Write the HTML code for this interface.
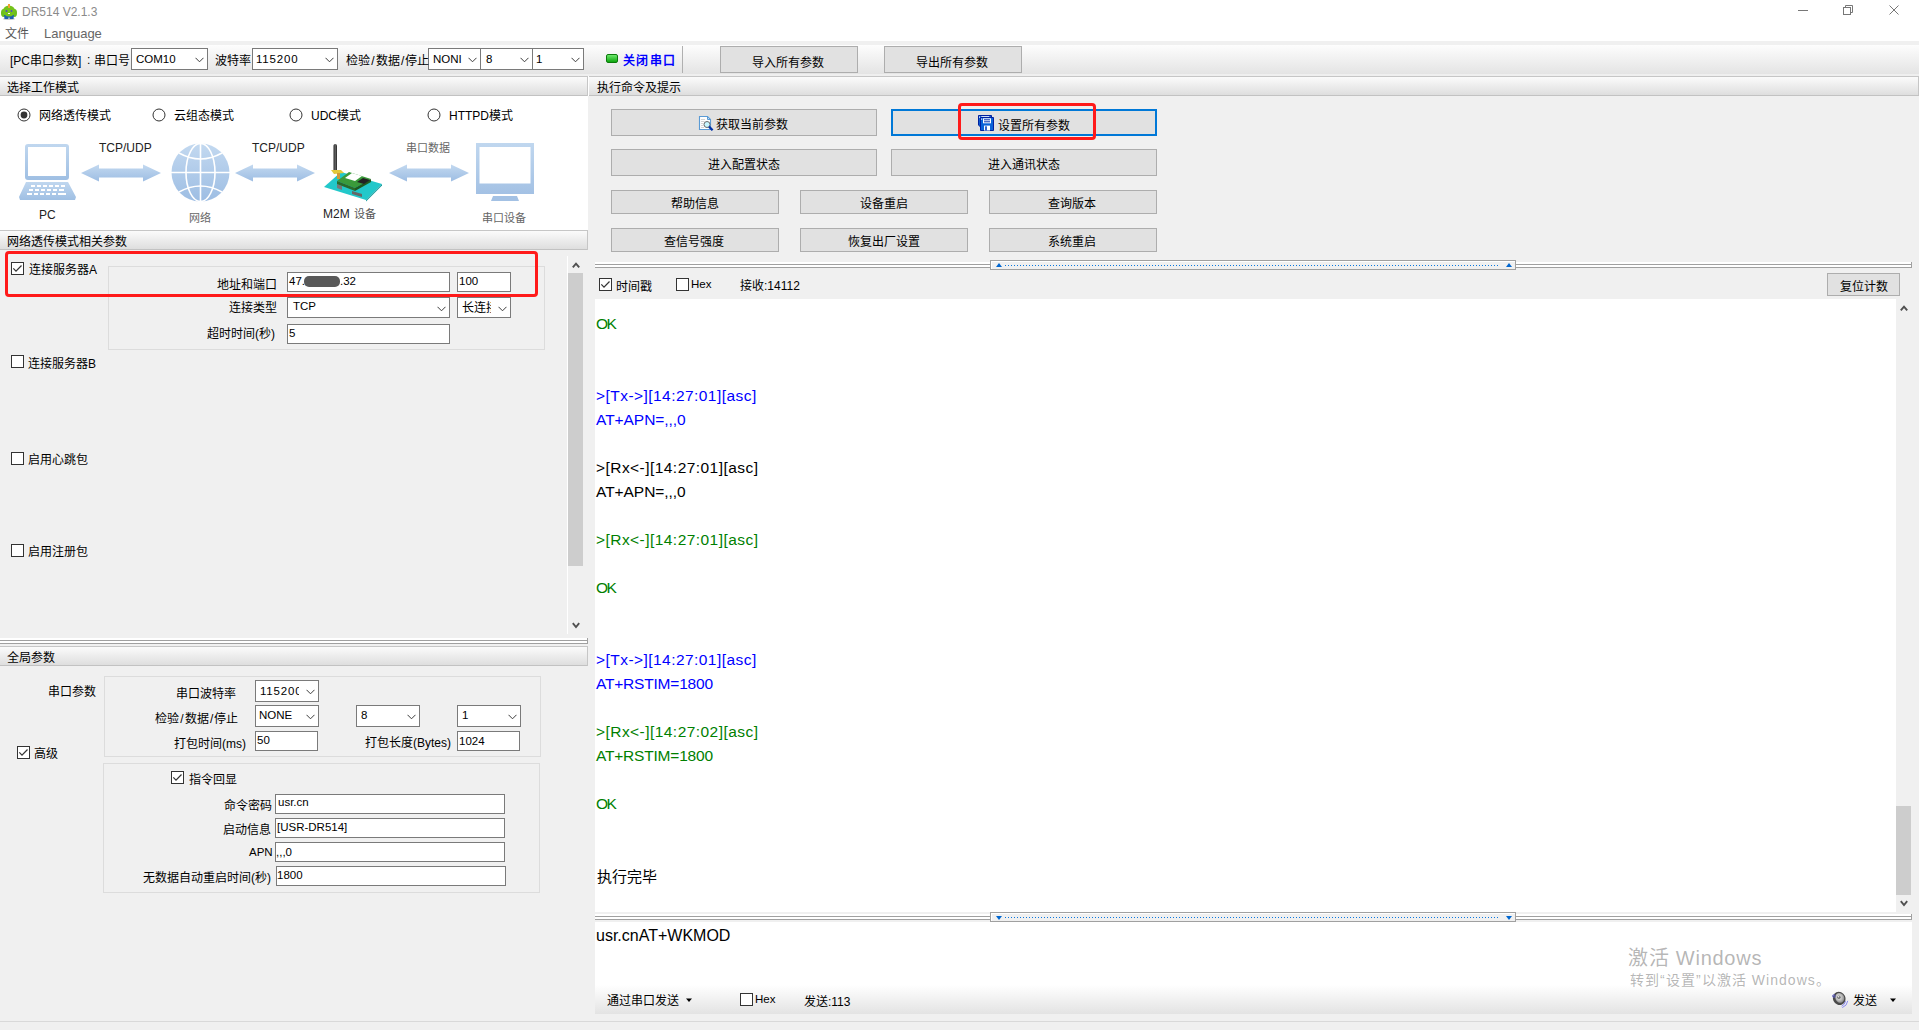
<!DOCTYPE html>
<html lang="zh-CN"><head><meta charset="utf-8"><title>DR514 V2.1.3</title>
<style>
html,body{margin:0;padding:0;width:1919px;height:1030px;overflow:hidden;background:#f0f0f0;font-family:'Liberation Sans', sans-serif;}
body>div{position:absolute;box-sizing:border-box;}
</style></head><body>
<div style="left:0px;top:0px;width:1919px;height:41px;background:#fff;"></div>
<svg style="position:absolute;left:0;top:2px" width="20" height="18">
<ellipse cx="9" cy="17" rx="6" ry="1" fill="#ccc"/>
<ellipse cx="3.5" cy="11" rx="2.5" ry="4" fill="#6cbf1c"/><ellipse cx="14.5" cy="11" rx="2.5" ry="4" fill="#6cbf1c"/>
<path d="M4 13 L14 13 L13.5 17 L10 17 L9 15 L8 17 L4.5 17Z" fill="#1f5fb0"/>
<ellipse cx="9" cy="9" rx="6" ry="5.5" fill="#74c21b"/>
<rect x="8" y="2" width="2" height="4" fill="#f0a030"/>
<circle cx="6.5" cy="9" r="1" fill="#5050c0"/><circle cx="11.5" cy="9" r="1" fill="#5050c0"/>
<rect x="8" y="11" width="2" height="1" fill="#fff"/>
</svg>
<svg style="position:absolute;left:1790px;top:0" width="129" height="24"><line x1="8" y1="10.5" x2="18" y2="10.5" stroke="#777" stroke-width="1"/><rect x="53.5" y="7.5" width="7" height="7" fill="none" stroke="#777"/><path d="M55.5 7.5 V5.5 H62.5 V12.5 H60.5" fill="none" stroke="#777"/><path d="M99.5 5.5 L108.5 14.5 M108.5 5.5 L99.5 14.5" stroke="#777" stroke-width="1"/></svg>
<div style="left:0px;top:41px;width:1919px;height:4px;background:#f0f0f0;"></div>
<div style="left:0px;top:45px;width:1919px;height:29px;background:linear-gradient(#fdfdfd,#e4e4e4);"></div>
<div style="left:0px;top:74px;width:1919px;height:2px;background:#efefef;"></div>
<div style="left:131px;top:48px;width:77px;height:22px;background:#fff;border:1px solid #7a7a7a;"></div>
<svg style="position:absolute;left:195px;top:57.0px" width="9" height="6"><path d="M0.5 0.8 L4.5 4.8 L8.5 0.8" fill="none" stroke="#3c3c3c" stroke-width="1"/></svg>
<div style="left:252px;top:48px;width:86px;height:22px;background:#fff;border:1px solid #7a7a7a;"></div>
<svg style="position:absolute;left:325px;top:57.0px" width="9" height="6"><path d="M0.5 0.8 L4.5 4.8 L8.5 0.8" fill="none" stroke="#3c3c3c" stroke-width="1"/></svg>
<div style="left:428px;top:48px;width:53px;height:22px;background:#fff;border:1px solid #7a7a7a;"></div>
<svg style="position:absolute;left:468px;top:57.0px" width="9" height="6"><path d="M0.5 0.8 L4.5 4.8 L8.5 0.8" fill="none" stroke="#3c3c3c" stroke-width="1"/></svg>
<div style="left:480px;top:48px;width:53px;height:22px;background:#fff;border:1px solid #7a7a7a;"></div>
<svg style="position:absolute;left:520px;top:57.0px" width="9" height="6"><path d="M0.5 0.8 L4.5 4.8 L8.5 0.8" fill="none" stroke="#3c3c3c" stroke-width="1"/></svg>
<div style="left:532px;top:48px;width:52px;height:22px;background:#fff;border:1px solid #7a7a7a;"></div>
<svg style="position:absolute;left:571px;top:57.0px" width="9" height="6"><path d="M0.5 0.8 L4.5 4.8 L8.5 0.8" fill="none" stroke="#3c3c3c" stroke-width="1"/></svg>
<div style="left:606px;top:54px;width:12px;height:9px;background:linear-gradient(#6de86d,#0fa60f);border:1px solid #0b7a0b;border-radius:2px;"></div>
<div style="left:682px;top:46px;width:1px;height:27px;background:#b0b0b0;"></div>
<div style="left:720px;top:46px;width:138px;height:27px;background:#e1e1e1;border:1px solid #adadad;"></div>
<div style="left:884px;top:46px;width:138px;height:27px;background:#e1e1e1;border:1px solid #adadad;"></div>
<div style="left:0px;top:76px;width:588px;height:20px;background:linear-gradient(#fbfbfb,#dedede);border-top:1px solid #c6c6c6;border-bottom:1px solid #c2c2c2;"></div>
<div style="left:587px;top:76px;width:1px;height:20px;background:#c6c6c6;"></div>
<div style="left:588px;top:76px;width:1px;height:20px;background:#fff;"></div>
<div style="left:0px;top:96px;width:588px;height:134px;background:#fff;"></div>
<svg style="position:absolute;left:17px;top:107.5px" width="14" height="14"><circle cx="7" cy="7" r="6" fill="#fff" stroke="#333" stroke-width="1"/><circle cx="7" cy="7" r="3.4" fill="#333"/></svg>
<svg style="position:absolute;left:152.4px;top:107.6px" width="14" height="14"><circle cx="7" cy="7" r="6" fill="#fff" stroke="#333" stroke-width="1"/></svg>
<svg style="position:absolute;left:289px;top:107.6px" width="14" height="14"><circle cx="7" cy="7" r="6" fill="#fff" stroke="#333" stroke-width="1"/></svg>
<svg style="position:absolute;left:427px;top:107.6px" width="14" height="14"><circle cx="7" cy="7" r="6" fill="#fff" stroke="#333" stroke-width="1"/></svg>
<svg style="position:absolute;left:81px;top:164px" width="80" height="18"><defs><linearGradient id="ag" x1="0" y1="0" x2="0" y2="1"><stop offset="0" stop-color="#c3d9f0"/><stop offset="1" stop-color="#9dbde3"/></linearGradient></defs><path d="M0 9 L18 0.5 L18 4.5 L62 4.5 L62 0.5 L80 9 L62 17.5 L62 13.5 L18 13.5 L18 17.5 Z" fill="url(#ag)"/></svg>
<svg style="position:absolute;left:235px;top:164px" width="80" height="18"><defs><linearGradient id="ag" x1="0" y1="0" x2="0" y2="1"><stop offset="0" stop-color="#c3d9f0"/><stop offset="1" stop-color="#9dbde3"/></linearGradient></defs><path d="M0 9 L18 0.5 L18 4.5 L62 4.5 L62 0.5 L80 9 L62 17.5 L62 13.5 L18 13.5 L18 17.5 Z" fill="url(#ag)"/></svg>
<svg style="position:absolute;left:389px;top:164px" width="80" height="18"><defs><linearGradient id="ag" x1="0" y1="0" x2="0" y2="1"><stop offset="0" stop-color="#c3d9f0"/><stop offset="1" stop-color="#9dbde3"/></linearGradient></defs><path d="M0 9 L18 0.5 L18 4.5 L62 4.5 L62 0.5 L80 9 L62 17.5 L62 13.5 L18 13.5 L18 17.5 Z" fill="url(#ag)"/></svg>
<svg style="position:absolute;left:18px;top:143px" width="60" height="59">
<defs><linearGradient id="lg" x1="0" y1="0" x2="0" y2="1"><stop offset="0" stop-color="#c0d7ef"/><stop offset="1" stop-color="#9fbfe3"/></linearGradient></defs>
<rect x="7" y="1" width="44" height="36" rx="3" fill="url(#lg)"/>
<rect x="10" y="4" width="38" height="29" fill="#fff"/>
<path d="M8 39 L50 39 L58 54 L57 57 L2 57 L1 54 Z" fill="url(#lg)"/>
<g fill="#fff"><rect x="13" y="42" width="4" height="2"/><rect x="19" y="42" width="4" height="2"/><rect x="25" y="42" width="4" height="2"/><rect x="31" y="42" width="4" height="2"/><rect x="37" y="42" width="4" height="2"/><rect x="43" y="42" width="4" height="2"/>
<rect x="11" y="46" width="4" height="2"/><rect x="17" y="46" width="4" height="2"/><rect x="23" y="46" width="4" height="2"/><rect x="29" y="46" width="4" height="2"/><rect x="35" y="46" width="4" height="2"/><rect x="41" y="46" width="5" height="2"/>
<rect x="9" y="50" width="5" height="2"/><rect x="16" y="50" width="4" height="2"/><rect x="22" y="50" width="4" height="2"/><rect x="28" y="50" width="4" height="2"/><rect x="34" y="50" width="4" height="2"/><rect x="40" y="50" width="8" height="2"/></g>
</svg>
<svg style="position:absolute;left:171px;top:143px" width="59" height="59">
<defs><linearGradient id="gg" x1="0" y1="0" x2="0" y2="1"><stop offset="0" stop-color="#c3d9f0"/><stop offset="1" stop-color="#9dbde3"/></linearGradient></defs>
<circle cx="29.5" cy="29.5" r="29" fill="url(#gg)"/>
<g fill="none" stroke="#fff" stroke-width="1.6">
<line x1="29.5" y1="0" x2="29.5" y2="59"/><line x1="0" y1="29.5" x2="59" y2="29.5"/>
<ellipse cx="29.5" cy="29.5" rx="14.5" ry="29"/>
<path d="M8 10 Q29.5 22 51 10"/><path d="M8 49 Q29.5 37 51 49"/>
</g></svg>
<svg style="position:absolute;left:322px;top:143px" width="62" height="60">
<defs><linearGradient id="ant" x1="0" y1="0" x2="1" y2="0"><stop offset="0" stop-color="#222"/><stop offset="0.5" stop-color="#666"/><stop offset="1" stop-color="#222"/></linearGradient></defs>
<rect x="11.5" y="1" width="3.5" height="29" rx="1.7" fill="url(#ant)"/>
<path d="M2 44 L19 29 L60 41 L44 57 Z" fill="#22c8ca"/>
<path d="M44 57 L60 41 L60 42.5 L44 58.5 Z" fill="#139c9e"/>
<path d="M15 41 L15 45 L20 47 L20 43Z" fill="#777"/>
<path d="M30 48 L30 51 L40 54 L40 51Z" fill="#666"/>
<path d="M15 38 L27 29 L49 36 L33 45 Z" fill="#3a9a3a"/>
<path d="M15 38 L33 45 L33 48 L15 41 Z" fill="#2a6a2a"/>
<path d="M33 45 L49 36 L49 39 L33 48 Z" fill="#1f5a1f"/>
<path d="M23 35 L30 30 L40 33 L33 38 Z" fill="#fff"/>
<path d="M35 39 L41 35 L48 37 L42 41 Z" fill="#222"/>
<path d="M9 27 L19 27 L22 30 L12 31Z" fill="#e3c83a"/>
<rect x="15" y="30" width="3" height="6" fill="#cf9a3a"/>
</svg>
<svg style="position:absolute;left:476px;top:143px" width="58" height="59">
<defs><linearGradient id="mg" x1="0" y1="0" x2="0" y2="1"><stop offset="0" stop-color="#c0d7ef"/><stop offset="1" stop-color="#a3c1e4"/></linearGradient></defs>
<rect x="0" y="0" width="58" height="51" fill="url(#mg)"/>
<rect x="3.5" y="4" width="51" height="36.5" fill="#fff"/>
<path d="M17 53 L41 53 L43 58 L15 58 Z" fill="#a3c1e4"/>
</svg>
<div style="left:0px;top:230px;width:588px;height:20px;background:linear-gradient(#fbfbfb,#dedede);border-top:1px solid #c6c6c6;border-bottom:1px solid #c2c2c2;"></div>
<div style="left:587px;top:230px;width:1px;height:20px;background:#c6c6c6;"></div>
<div style="left:567px;top:256px;width:1px;height:378px;background:#fff;"></div>
<div style="left:568px;top:273px;width:15px;height:293px;background:#cdcdcd;"></div>
<svg style="position:absolute;left:571.5px;top:261px" width="8" height="8"><path d="M0.8 6.4 L4 2.6 L7.2 6.4" fill="none" stroke="#505050" stroke-width="1.9"/></svg>
<svg style="position:absolute;left:571.5px;top:622px" width="8" height="8"><path d="M0.8 1.2 L4 5 L7.2 1.2" fill="none" stroke="#505050" stroke-width="1.9"/></svg>
<div style="left:11px;top:262px;width:13px;height:13px;background:#fff;border:1px solid #333;"><svg width="11" height="11" style="position:absolute;left:0;top:0"><path d="M1.3 5.4 L4 8.1 L9.5 2.5" fill="none" stroke="#333" stroke-width="1.25"/></svg></div>
<div style="left:108px;top:266px;width:437px;height:84px;border:1px solid #dcdcdc;"></div>
<div style="left:287px;top:272px;width:163px;height:20px;background:#fff;border:1px solid #7a7a7a;"></div>
<div style="left:304px;top:276px;width:36px;height:11px;background:#595959;border-radius:5px;filter:blur(0.6px);"></div>
<div style="left:457px;top:272px;width:54px;height:20px;background:#fff;border:1px solid #7a7a7a;"></div>
<div style="left:287px;top:297px;width:163px;height:21px;background:#fff;border:1px solid #7a7a7a;"></div>
<svg style="position:absolute;left:437px;top:305.5px" width="9" height="6"><path d="M0.5 0.8 L4.5 4.8 L8.5 0.8" fill="none" stroke="#3c3c3c" stroke-width="1"/></svg>
<div style="left:457px;top:297px;width:54px;height:21px;background:#fff;border:1px solid #7a7a7a;"></div>
<svg style="position:absolute;left:498px;top:305.5px" width="9" height="6"><path d="M0.5 0.8 L4.5 4.8 L8.5 0.8" fill="none" stroke="#3c3c3c" stroke-width="1"/></svg>
<div style="left:287px;top:324px;width:163px;height:20px;background:#fff;border:1px solid #7a7a7a;"></div>
<div style="left:11px;top:355px;width:13px;height:13px;background:#fff;border:1px solid #333;"></div>
<div style="left:11px;top:452px;width:13px;height:13px;background:#fff;border:1px solid #333;"></div>
<div style="left:11px;top:544px;width:13px;height:13px;background:#fff;border:1px solid #333;"></div>
<div style="left:5px;top:251px;width:533px;height:46px;border:3px solid #ff1a1a;border-radius:4px;"></div>
<div style="left:0px;top:638px;width:588px;height:6px;background:#fff;"></div>
<div style="left:0px;top:640px;width:588px;height:1px;background:#a0a0a0;"></div>
<div style="left:0px;top:643px;width:588px;height:1px;background:#a0a0a0;"></div>
<div style="left:587px;top:638px;width:1px;height:6px;background:#a0a0a0;"></div>
<div style="left:0px;top:646px;width:588px;height:20px;background:linear-gradient(#fbfbfb,#dedede);border-top:1px solid #c6c6c6;border-bottom:1px solid #c2c2c2;"></div>
<div style="left:587px;top:646px;width:1px;height:20px;background:#c6c6c6;"></div>
<div style="left:104px;top:676px;width:437px;height:81px;border:1px solid #dcdcdc;"></div>
<div style="left:255px;top:680px;width:64px;height:22px;background:#fff;border:1px solid #7a7a7a;"></div>
<svg style="position:absolute;left:306px;top:689.0px" width="9" height="6"><path d="M0.5 0.8 L4.5 4.8 L8.5 0.8" fill="none" stroke="#3c3c3c" stroke-width="1"/></svg>
<div style="left:255px;top:705px;width:64px;height:22px;background:#fff;border:1px solid #7a7a7a;"></div>
<svg style="position:absolute;left:306px;top:714.0px" width="9" height="6"><path d="M0.5 0.8 L4.5 4.8 L8.5 0.8" fill="none" stroke="#3c3c3c" stroke-width="1"/></svg>
<div style="left:356px;top:705px;width:64px;height:22px;background:#fff;border:1px solid #7a7a7a;"></div>
<svg style="position:absolute;left:407px;top:714.0px" width="9" height="6"><path d="M0.5 0.8 L4.5 4.8 L8.5 0.8" fill="none" stroke="#3c3c3c" stroke-width="1"/></svg>
<div style="left:457px;top:705px;width:64px;height:22px;background:#fff;border:1px solid #7a7a7a;"></div>
<svg style="position:absolute;left:508px;top:714.0px" width="9" height="6"><path d="M0.5 0.8 L4.5 4.8 L8.5 0.8" fill="none" stroke="#3c3c3c" stroke-width="1"/></svg>
<div style="left:255px;top:731px;width:63px;height:20px;background:#fff;border:1px solid #7a7a7a;"></div>
<div style="left:457px;top:731px;width:63px;height:20px;background:#fff;border:1px solid #7a7a7a;"></div>
<div style="left:17px;top:746px;width:13px;height:13px;background:#fff;border:1px solid #333;"><svg width="11" height="11" style="position:absolute;left:0;top:0"><path d="M1.3 5.4 L4 8.1 L9.5 2.5" fill="none" stroke="#333" stroke-width="1.25"/></svg></div>
<div style="left:103px;top:763px;width:437px;height:130px;border:1px solid #dcdcdc;"></div>
<div style="left:171px;top:771px;width:13px;height:13px;background:#fff;border:1px solid #333;"><svg width="11" height="11" style="position:absolute;left:0;top:0"><path d="M1.3 5.4 L4 8.1 L9.5 2.5" fill="none" stroke="#333" stroke-width="1.25"/></svg></div>
<div style="left:275px;top:794px;width:230px;height:20px;background:#fff;border:1px solid #7a7a7a;"></div>
<div style="left:275px;top:818px;width:230px;height:20px;background:#fff;border:1px solid #7a7a7a;"></div>
<div style="left:275px;top:842px;width:230px;height:20px;background:#fff;border:1px solid #7a7a7a;"></div>
<div style="left:276px;top:866px;width:230px;height:20px;background:#fff;border:1px solid #7a7a7a;"></div>
<div style="left:589px;top:76px;width:1330px;height:20px;background:linear-gradient(#fbfbfb,#dedede);border-top:1px solid #c6c6c6;border-bottom:1px solid #c2c2c2;"></div>
<div style="left:1918px;top:77px;width:1px;height:18px;background:#c6c6c6;"></div>
<div style="left:611px;top:109px;width:266px;height:27px;background:#e1e1e1;border:1px solid #adadad;"></div>
<svg style="position:absolute;left:698px;top:115px" width="17" height="17">
<path d="M1.5 1.5 H9.5 L12.5 4.5 V14.5 H1.5 Z" fill="#fff" stroke="#5b9bd5" stroke-width="1.1"/>
<path d="M9.5 1.5 V4.5 H12.5" fill="none" stroke="#5b9bd5" stroke-width="1"/>
<path d="M3 4.5 H7 M3 6.5 H6.5 M3 8.5 H5.5 M3 10.5 H5.5 M3 12.5 H6" stroke="#cfcfcf" stroke-width="0.9"/>
<circle cx="9" cy="9.5" r="3" fill="#c8f6ff" stroke="#6a6a6a" stroke-width="1"/>
<path d="M11 11.6 L14.6 15.2" stroke="#0032a8" stroke-width="2.3"/>
</svg>
<div style="left:891px;top:109px;width:266px;height:27px;background:#e1e1e1;border:1px solid #adadad;border:2px solid #0078d7;"></div>
<svg style="position:absolute;left:977px;top:114px" width="19" height="19">
<path d="M1.5 1.5 H14.5 V13.5 H4 L1.5 11 Z" fill="#0a5ad0" stroke="#0020a0" stroke-width="1"/>
<rect x="4.3" y="2.2" width="8" height="1.4" fill="#fff"/>
<rect x="2" y="2.5" width="1.2" height="1.2" fill="#fff"/>
<path d="M3.5 3.5 H16.5 V16.5 H3.5 Z" fill="#0a62d8" stroke="#0020a0" stroke-width="1"/>
<rect x="4" y="4.5" width="1.2" height="1.2" fill="#eef"/>
<rect x="6" y="4.3" width="8" height="5" fill="#fff"/>
<rect x="7" y="5.3" width="6" height="1" fill="#0030b0"/><rect x="7" y="7.3" width="6" height="1" fill="#0030b0"/>
<rect x="7" y="11.6" width="6" height="4.9" fill="#fff"/><rect x="8.2" y="12.3" width="1.6" height="4.2" fill="#0040c0"/>
</svg>
<div style="left:611px;top:149px;width:266px;height:27px;background:#e1e1e1;border:1px solid #adadad;"></div>
<div style="left:891px;top:149px;width:266px;height:27px;background:#e1e1e1;border:1px solid #adadad;"></div>
<div style="left:611px;top:190px;width:168px;height:24px;background:#e1e1e1;border:1px solid #adadad;"></div>
<div style="left:800px;top:190px;width:168px;height:24px;background:#e1e1e1;border:1px solid #adadad;"></div>
<div style="left:989px;top:190px;width:168px;height:24px;background:#e1e1e1;border:1px solid #adadad;"></div>
<div style="left:611px;top:228px;width:168px;height:24px;background:#e1e1e1;border:1px solid #adadad;"></div>
<div style="left:800px;top:228px;width:168px;height:24px;background:#e1e1e1;border:1px solid #adadad;"></div>
<div style="left:989px;top:228px;width:168px;height:24px;background:#e1e1e1;border:1px solid #adadad;"></div>
<div style="left:958px;top:103px;width:138px;height:37px;border:3px solid #ff1a1a;border-radius:4px;"></div>
<div style="left:595px;top:262px;width:1317px;height:6px;background:#fff;"></div>
<div style="left:595px;top:264px;width:1317px;height:1px;background:#a0a0a0;"></div>
<div style="left:595px;top:267px;width:1317px;height:1px;background:#a0a0a0;"></div>
<div style="left:1911px;top:262px;width:1px;height:6px;background:#a0a0a0;"></div>
<div style="left:990px;top:260px;width:526px;height:10px;background:#f0f0f0;border:1px solid #a0a0a0;box-shadow:inset 1px 1px #fff;"></div>
<svg style="position:absolute;left:996px;top:263px" width="520" height="5"><path d="M0 4 L3 0 L6 4Z" fill="#0066d0"/><g transform="translate(0,1)"><rect x="9" y="1" width="1" height="1" fill="#0a78e0"/><rect x="12" y="1" width="1" height="1" fill="#0a78e0"/><rect x="15" y="1" width="1" height="1" fill="#0a78e0"/><rect x="18" y="1" width="1" height="1" fill="#0a78e0"/><rect x="21" y="1" width="1" height="1" fill="#0a78e0"/><rect x="24" y="1" width="1" height="1" fill="#0a78e0"/><rect x="27" y="1" width="1" height="1" fill="#0a78e0"/><rect x="30" y="1" width="1" height="1" fill="#0a78e0"/><rect x="33" y="1" width="1" height="1" fill="#0a78e0"/><rect x="36" y="1" width="1" height="1" fill="#0a78e0"/><rect x="39" y="1" width="1" height="1" fill="#0a78e0"/><rect x="42" y="1" width="1" height="1" fill="#0a78e0"/><rect x="45" y="1" width="1" height="1" fill="#0a78e0"/><rect x="48" y="1" width="1" height="1" fill="#0a78e0"/><rect x="51" y="1" width="1" height="1" fill="#0a78e0"/><rect x="54" y="1" width="1" height="1" fill="#0a78e0"/><rect x="57" y="1" width="1" height="1" fill="#0a78e0"/><rect x="60" y="1" width="1" height="1" fill="#0a78e0"/><rect x="63" y="1" width="1" height="1" fill="#0a78e0"/><rect x="66" y="1" width="1" height="1" fill="#0a78e0"/><rect x="69" y="1" width="1" height="1" fill="#0a78e0"/><rect x="72" y="1" width="1" height="1" fill="#0a78e0"/><rect x="75" y="1" width="1" height="1" fill="#0a78e0"/><rect x="78" y="1" width="1" height="1" fill="#0a78e0"/><rect x="81" y="1" width="1" height="1" fill="#0a78e0"/><rect x="84" y="1" width="1" height="1" fill="#0a78e0"/><rect x="87" y="1" width="1" height="1" fill="#0a78e0"/><rect x="90" y="1" width="1" height="1" fill="#0a78e0"/><rect x="93" y="1" width="1" height="1" fill="#0a78e0"/><rect x="96" y="1" width="1" height="1" fill="#0a78e0"/><rect x="99" y="1" width="1" height="1" fill="#0a78e0"/><rect x="102" y="1" width="1" height="1" fill="#0a78e0"/><rect x="105" y="1" width="1" height="1" fill="#0a78e0"/><rect x="108" y="1" width="1" height="1" fill="#0a78e0"/><rect x="111" y="1" width="1" height="1" fill="#0a78e0"/><rect x="114" y="1" width="1" height="1" fill="#0a78e0"/><rect x="117" y="1" width="1" height="1" fill="#0a78e0"/><rect x="120" y="1" width="1" height="1" fill="#0a78e0"/><rect x="123" y="1" width="1" height="1" fill="#0a78e0"/><rect x="126" y="1" width="1" height="1" fill="#0a78e0"/><rect x="129" y="1" width="1" height="1" fill="#0a78e0"/><rect x="132" y="1" width="1" height="1" fill="#0a78e0"/><rect x="135" y="1" width="1" height="1" fill="#0a78e0"/><rect x="138" y="1" width="1" height="1" fill="#0a78e0"/><rect x="141" y="1" width="1" height="1" fill="#0a78e0"/><rect x="144" y="1" width="1" height="1" fill="#0a78e0"/><rect x="147" y="1" width="1" height="1" fill="#0a78e0"/><rect x="150" y="1" width="1" height="1" fill="#0a78e0"/><rect x="153" y="1" width="1" height="1" fill="#0a78e0"/><rect x="156" y="1" width="1" height="1" fill="#0a78e0"/><rect x="159" y="1" width="1" height="1" fill="#0a78e0"/><rect x="162" y="1" width="1" height="1" fill="#0a78e0"/><rect x="165" y="1" width="1" height="1" fill="#0a78e0"/><rect x="168" y="1" width="1" height="1" fill="#0a78e0"/><rect x="171" y="1" width="1" height="1" fill="#0a78e0"/><rect x="174" y="1" width="1" height="1" fill="#0a78e0"/><rect x="177" y="1" width="1" height="1" fill="#0a78e0"/><rect x="180" y="1" width="1" height="1" fill="#0a78e0"/><rect x="183" y="1" width="1" height="1" fill="#0a78e0"/><rect x="186" y="1" width="1" height="1" fill="#0a78e0"/><rect x="189" y="1" width="1" height="1" fill="#0a78e0"/><rect x="192" y="1" width="1" height="1" fill="#0a78e0"/><rect x="195" y="1" width="1" height="1" fill="#0a78e0"/><rect x="198" y="1" width="1" height="1" fill="#0a78e0"/><rect x="201" y="1" width="1" height="1" fill="#0a78e0"/><rect x="204" y="1" width="1" height="1" fill="#0a78e0"/><rect x="207" y="1" width="1" height="1" fill="#0a78e0"/><rect x="210" y="1" width="1" height="1" fill="#0a78e0"/><rect x="213" y="1" width="1" height="1" fill="#0a78e0"/><rect x="216" y="1" width="1" height="1" fill="#0a78e0"/><rect x="219" y="1" width="1" height="1" fill="#0a78e0"/><rect x="222" y="1" width="1" height="1" fill="#0a78e0"/><rect x="225" y="1" width="1" height="1" fill="#0a78e0"/><rect x="228" y="1" width="1" height="1" fill="#0a78e0"/><rect x="231" y="1" width="1" height="1" fill="#0a78e0"/><rect x="234" y="1" width="1" height="1" fill="#0a78e0"/><rect x="237" y="1" width="1" height="1" fill="#0a78e0"/><rect x="240" y="1" width="1" height="1" fill="#0a78e0"/><rect x="243" y="1" width="1" height="1" fill="#0a78e0"/><rect x="246" y="1" width="1" height="1" fill="#0a78e0"/><rect x="249" y="1" width="1" height="1" fill="#0a78e0"/><rect x="252" y="1" width="1" height="1" fill="#0a78e0"/><rect x="255" y="1" width="1" height="1" fill="#0a78e0"/><rect x="258" y="1" width="1" height="1" fill="#0a78e0"/><rect x="261" y="1" width="1" height="1" fill="#0a78e0"/><rect x="264" y="1" width="1" height="1" fill="#0a78e0"/><rect x="267" y="1" width="1" height="1" fill="#0a78e0"/><rect x="270" y="1" width="1" height="1" fill="#0a78e0"/><rect x="273" y="1" width="1" height="1" fill="#0a78e0"/><rect x="276" y="1" width="1" height="1" fill="#0a78e0"/><rect x="279" y="1" width="1" height="1" fill="#0a78e0"/><rect x="282" y="1" width="1" height="1" fill="#0a78e0"/><rect x="285" y="1" width="1" height="1" fill="#0a78e0"/><rect x="288" y="1" width="1" height="1" fill="#0a78e0"/><rect x="291" y="1" width="1" height="1" fill="#0a78e0"/><rect x="294" y="1" width="1" height="1" fill="#0a78e0"/><rect x="297" y="1" width="1" height="1" fill="#0a78e0"/><rect x="300" y="1" width="1" height="1" fill="#0a78e0"/><rect x="303" y="1" width="1" height="1" fill="#0a78e0"/><rect x="306" y="1" width="1" height="1" fill="#0a78e0"/><rect x="309" y="1" width="1" height="1" fill="#0a78e0"/><rect x="312" y="1" width="1" height="1" fill="#0a78e0"/><rect x="315" y="1" width="1" height="1" fill="#0a78e0"/><rect x="318" y="1" width="1" height="1" fill="#0a78e0"/><rect x="321" y="1" width="1" height="1" fill="#0a78e0"/><rect x="324" y="1" width="1" height="1" fill="#0a78e0"/><rect x="327" y="1" width="1" height="1" fill="#0a78e0"/><rect x="330" y="1" width="1" height="1" fill="#0a78e0"/><rect x="333" y="1" width="1" height="1" fill="#0a78e0"/><rect x="336" y="1" width="1" height="1" fill="#0a78e0"/><rect x="339" y="1" width="1" height="1" fill="#0a78e0"/><rect x="342" y="1" width="1" height="1" fill="#0a78e0"/><rect x="345" y="1" width="1" height="1" fill="#0a78e0"/><rect x="348" y="1" width="1" height="1" fill="#0a78e0"/><rect x="351" y="1" width="1" height="1" fill="#0a78e0"/><rect x="354" y="1" width="1" height="1" fill="#0a78e0"/><rect x="357" y="1" width="1" height="1" fill="#0a78e0"/><rect x="360" y="1" width="1" height="1" fill="#0a78e0"/><rect x="363" y="1" width="1" height="1" fill="#0a78e0"/><rect x="366" y="1" width="1" height="1" fill="#0a78e0"/><rect x="369" y="1" width="1" height="1" fill="#0a78e0"/><rect x="372" y="1" width="1" height="1" fill="#0a78e0"/><rect x="375" y="1" width="1" height="1" fill="#0a78e0"/><rect x="378" y="1" width="1" height="1" fill="#0a78e0"/><rect x="381" y="1" width="1" height="1" fill="#0a78e0"/><rect x="384" y="1" width="1" height="1" fill="#0a78e0"/><rect x="387" y="1" width="1" height="1" fill="#0a78e0"/><rect x="390" y="1" width="1" height="1" fill="#0a78e0"/><rect x="393" y="1" width="1" height="1" fill="#0a78e0"/><rect x="396" y="1" width="1" height="1" fill="#0a78e0"/><rect x="399" y="1" width="1" height="1" fill="#0a78e0"/><rect x="402" y="1" width="1" height="1" fill="#0a78e0"/><rect x="405" y="1" width="1" height="1" fill="#0a78e0"/><rect x="408" y="1" width="1" height="1" fill="#0a78e0"/><rect x="411" y="1" width="1" height="1" fill="#0a78e0"/><rect x="414" y="1" width="1" height="1" fill="#0a78e0"/><rect x="417" y="1" width="1" height="1" fill="#0a78e0"/><rect x="420" y="1" width="1" height="1" fill="#0a78e0"/><rect x="423" y="1" width="1" height="1" fill="#0a78e0"/><rect x="426" y="1" width="1" height="1" fill="#0a78e0"/><rect x="429" y="1" width="1" height="1" fill="#0a78e0"/><rect x="432" y="1" width="1" height="1" fill="#0a78e0"/><rect x="435" y="1" width="1" height="1" fill="#0a78e0"/><rect x="438" y="1" width="1" height="1" fill="#0a78e0"/><rect x="441" y="1" width="1" height="1" fill="#0a78e0"/><rect x="444" y="1" width="1" height="1" fill="#0a78e0"/><rect x="447" y="1" width="1" height="1" fill="#0a78e0"/><rect x="450" y="1" width="1" height="1" fill="#0a78e0"/><rect x="453" y="1" width="1" height="1" fill="#0a78e0"/><rect x="456" y="1" width="1" height="1" fill="#0a78e0"/><rect x="459" y="1" width="1" height="1" fill="#0a78e0"/><rect x="462" y="1" width="1" height="1" fill="#0a78e0"/><rect x="465" y="1" width="1" height="1" fill="#0a78e0"/><rect x="468" y="1" width="1" height="1" fill="#0a78e0"/><rect x="471" y="1" width="1" height="1" fill="#0a78e0"/><rect x="474" y="1" width="1" height="1" fill="#0a78e0"/><rect x="477" y="1" width="1" height="1" fill="#0a78e0"/><rect x="480" y="1" width="1" height="1" fill="#0a78e0"/><rect x="483" y="1" width="1" height="1" fill="#0a78e0"/><rect x="486" y="1" width="1" height="1" fill="#0a78e0"/><rect x="489" y="1" width="1" height="1" fill="#0a78e0"/><rect x="492" y="1" width="1" height="1" fill="#0a78e0"/><rect x="495" y="1" width="1" height="1" fill="#0a78e0"/><rect x="498" y="1" width="1" height="1" fill="#0a78e0"/><rect x="501" y="1" width="1" height="1" fill="#0a78e0"/></g><path transform="translate(510,0)" d="M0 4 L3 0 L6 4Z" fill="#0066d0"/></svg>
<div style="left:599px;top:278px;width:13px;height:13px;background:#fff;border:1px solid #333;"><svg width="11" height="11" style="position:absolute;left:0;top:0"><path d="M1.3 5.4 L4 8.1 L9.5 2.5" fill="none" stroke="#333" stroke-width="1.25"/></svg></div>
<div style="left:676px;top:278px;width:13px;height:13px;background:#fff;border:1px solid #333;"></div>
<div style="left:1827px;top:273px;width:73px;height:23px;background:#e1e1e1;border:1px solid #adadad;"></div>
<div style="left:595px;top:299px;width:1301px;height:613px;background:#fff;"></div>
<div style="left:1896px;top:806px;width:15px;height:89px;background:#cdcdcd;"></div>
<svg style="position:absolute;left:1899.5px;top:304px" width="8" height="8"><path d="M0.8 6.4 L4 2.6 L7.2 6.4" fill="none" stroke="#505050" stroke-width="1.9"/></svg>
<svg style="position:absolute;left:1899.5px;top:899.5px" width="8" height="8"><path d="M0.8 1.2 L4 5 L7.2 1.2" fill="none" stroke="#505050" stroke-width="1.9"/></svg>
<div style="left:595px;top:912px;width:1317px;height:10px;background:#f0f0f0;"></div>
<div style="left:595px;top:914px;width:1317px;height:6px;background:#fff;"></div>
<div style="left:595px;top:916px;width:1317px;height:1px;background:#a0a0a0;"></div>
<div style="left:595px;top:919px;width:1317px;height:1px;background:#a0a0a0;"></div>
<div style="left:1911px;top:914px;width:1px;height:6px;background:#a0a0a0;"></div>
<div style="left:990px;top:912px;width:526px;height:10px;background:#f0f0f0;border:1px solid #a0a0a0;box-shadow:inset 1px 1px #fff;"></div>
<svg style="position:absolute;left:996px;top:916px" width="520" height="5"><path d="M0 0 L6 0 L3 4Z" fill="#0066d0"/><g transform="translate(0,0)"><rect x="9" y="1" width="1" height="1" fill="#0a78e0"/><rect x="12" y="1" width="1" height="1" fill="#0a78e0"/><rect x="15" y="1" width="1" height="1" fill="#0a78e0"/><rect x="18" y="1" width="1" height="1" fill="#0a78e0"/><rect x="21" y="1" width="1" height="1" fill="#0a78e0"/><rect x="24" y="1" width="1" height="1" fill="#0a78e0"/><rect x="27" y="1" width="1" height="1" fill="#0a78e0"/><rect x="30" y="1" width="1" height="1" fill="#0a78e0"/><rect x="33" y="1" width="1" height="1" fill="#0a78e0"/><rect x="36" y="1" width="1" height="1" fill="#0a78e0"/><rect x="39" y="1" width="1" height="1" fill="#0a78e0"/><rect x="42" y="1" width="1" height="1" fill="#0a78e0"/><rect x="45" y="1" width="1" height="1" fill="#0a78e0"/><rect x="48" y="1" width="1" height="1" fill="#0a78e0"/><rect x="51" y="1" width="1" height="1" fill="#0a78e0"/><rect x="54" y="1" width="1" height="1" fill="#0a78e0"/><rect x="57" y="1" width="1" height="1" fill="#0a78e0"/><rect x="60" y="1" width="1" height="1" fill="#0a78e0"/><rect x="63" y="1" width="1" height="1" fill="#0a78e0"/><rect x="66" y="1" width="1" height="1" fill="#0a78e0"/><rect x="69" y="1" width="1" height="1" fill="#0a78e0"/><rect x="72" y="1" width="1" height="1" fill="#0a78e0"/><rect x="75" y="1" width="1" height="1" fill="#0a78e0"/><rect x="78" y="1" width="1" height="1" fill="#0a78e0"/><rect x="81" y="1" width="1" height="1" fill="#0a78e0"/><rect x="84" y="1" width="1" height="1" fill="#0a78e0"/><rect x="87" y="1" width="1" height="1" fill="#0a78e0"/><rect x="90" y="1" width="1" height="1" fill="#0a78e0"/><rect x="93" y="1" width="1" height="1" fill="#0a78e0"/><rect x="96" y="1" width="1" height="1" fill="#0a78e0"/><rect x="99" y="1" width="1" height="1" fill="#0a78e0"/><rect x="102" y="1" width="1" height="1" fill="#0a78e0"/><rect x="105" y="1" width="1" height="1" fill="#0a78e0"/><rect x="108" y="1" width="1" height="1" fill="#0a78e0"/><rect x="111" y="1" width="1" height="1" fill="#0a78e0"/><rect x="114" y="1" width="1" height="1" fill="#0a78e0"/><rect x="117" y="1" width="1" height="1" fill="#0a78e0"/><rect x="120" y="1" width="1" height="1" fill="#0a78e0"/><rect x="123" y="1" width="1" height="1" fill="#0a78e0"/><rect x="126" y="1" width="1" height="1" fill="#0a78e0"/><rect x="129" y="1" width="1" height="1" fill="#0a78e0"/><rect x="132" y="1" width="1" height="1" fill="#0a78e0"/><rect x="135" y="1" width="1" height="1" fill="#0a78e0"/><rect x="138" y="1" width="1" height="1" fill="#0a78e0"/><rect x="141" y="1" width="1" height="1" fill="#0a78e0"/><rect x="144" y="1" width="1" height="1" fill="#0a78e0"/><rect x="147" y="1" width="1" height="1" fill="#0a78e0"/><rect x="150" y="1" width="1" height="1" fill="#0a78e0"/><rect x="153" y="1" width="1" height="1" fill="#0a78e0"/><rect x="156" y="1" width="1" height="1" fill="#0a78e0"/><rect x="159" y="1" width="1" height="1" fill="#0a78e0"/><rect x="162" y="1" width="1" height="1" fill="#0a78e0"/><rect x="165" y="1" width="1" height="1" fill="#0a78e0"/><rect x="168" y="1" width="1" height="1" fill="#0a78e0"/><rect x="171" y="1" width="1" height="1" fill="#0a78e0"/><rect x="174" y="1" width="1" height="1" fill="#0a78e0"/><rect x="177" y="1" width="1" height="1" fill="#0a78e0"/><rect x="180" y="1" width="1" height="1" fill="#0a78e0"/><rect x="183" y="1" width="1" height="1" fill="#0a78e0"/><rect x="186" y="1" width="1" height="1" fill="#0a78e0"/><rect x="189" y="1" width="1" height="1" fill="#0a78e0"/><rect x="192" y="1" width="1" height="1" fill="#0a78e0"/><rect x="195" y="1" width="1" height="1" fill="#0a78e0"/><rect x="198" y="1" width="1" height="1" fill="#0a78e0"/><rect x="201" y="1" width="1" height="1" fill="#0a78e0"/><rect x="204" y="1" width="1" height="1" fill="#0a78e0"/><rect x="207" y="1" width="1" height="1" fill="#0a78e0"/><rect x="210" y="1" width="1" height="1" fill="#0a78e0"/><rect x="213" y="1" width="1" height="1" fill="#0a78e0"/><rect x="216" y="1" width="1" height="1" fill="#0a78e0"/><rect x="219" y="1" width="1" height="1" fill="#0a78e0"/><rect x="222" y="1" width="1" height="1" fill="#0a78e0"/><rect x="225" y="1" width="1" height="1" fill="#0a78e0"/><rect x="228" y="1" width="1" height="1" fill="#0a78e0"/><rect x="231" y="1" width="1" height="1" fill="#0a78e0"/><rect x="234" y="1" width="1" height="1" fill="#0a78e0"/><rect x="237" y="1" width="1" height="1" fill="#0a78e0"/><rect x="240" y="1" width="1" height="1" fill="#0a78e0"/><rect x="243" y="1" width="1" height="1" fill="#0a78e0"/><rect x="246" y="1" width="1" height="1" fill="#0a78e0"/><rect x="249" y="1" width="1" height="1" fill="#0a78e0"/><rect x="252" y="1" width="1" height="1" fill="#0a78e0"/><rect x="255" y="1" width="1" height="1" fill="#0a78e0"/><rect x="258" y="1" width="1" height="1" fill="#0a78e0"/><rect x="261" y="1" width="1" height="1" fill="#0a78e0"/><rect x="264" y="1" width="1" height="1" fill="#0a78e0"/><rect x="267" y="1" width="1" height="1" fill="#0a78e0"/><rect x="270" y="1" width="1" height="1" fill="#0a78e0"/><rect x="273" y="1" width="1" height="1" fill="#0a78e0"/><rect x="276" y="1" width="1" height="1" fill="#0a78e0"/><rect x="279" y="1" width="1" height="1" fill="#0a78e0"/><rect x="282" y="1" width="1" height="1" fill="#0a78e0"/><rect x="285" y="1" width="1" height="1" fill="#0a78e0"/><rect x="288" y="1" width="1" height="1" fill="#0a78e0"/><rect x="291" y="1" width="1" height="1" fill="#0a78e0"/><rect x="294" y="1" width="1" height="1" fill="#0a78e0"/><rect x="297" y="1" width="1" height="1" fill="#0a78e0"/><rect x="300" y="1" width="1" height="1" fill="#0a78e0"/><rect x="303" y="1" width="1" height="1" fill="#0a78e0"/><rect x="306" y="1" width="1" height="1" fill="#0a78e0"/><rect x="309" y="1" width="1" height="1" fill="#0a78e0"/><rect x="312" y="1" width="1" height="1" fill="#0a78e0"/><rect x="315" y="1" width="1" height="1" fill="#0a78e0"/><rect x="318" y="1" width="1" height="1" fill="#0a78e0"/><rect x="321" y="1" width="1" height="1" fill="#0a78e0"/><rect x="324" y="1" width="1" height="1" fill="#0a78e0"/><rect x="327" y="1" width="1" height="1" fill="#0a78e0"/><rect x="330" y="1" width="1" height="1" fill="#0a78e0"/><rect x="333" y="1" width="1" height="1" fill="#0a78e0"/><rect x="336" y="1" width="1" height="1" fill="#0a78e0"/><rect x="339" y="1" width="1" height="1" fill="#0a78e0"/><rect x="342" y="1" width="1" height="1" fill="#0a78e0"/><rect x="345" y="1" width="1" height="1" fill="#0a78e0"/><rect x="348" y="1" width="1" height="1" fill="#0a78e0"/><rect x="351" y="1" width="1" height="1" fill="#0a78e0"/><rect x="354" y="1" width="1" height="1" fill="#0a78e0"/><rect x="357" y="1" width="1" height="1" fill="#0a78e0"/><rect x="360" y="1" width="1" height="1" fill="#0a78e0"/><rect x="363" y="1" width="1" height="1" fill="#0a78e0"/><rect x="366" y="1" width="1" height="1" fill="#0a78e0"/><rect x="369" y="1" width="1" height="1" fill="#0a78e0"/><rect x="372" y="1" width="1" height="1" fill="#0a78e0"/><rect x="375" y="1" width="1" height="1" fill="#0a78e0"/><rect x="378" y="1" width="1" height="1" fill="#0a78e0"/><rect x="381" y="1" width="1" height="1" fill="#0a78e0"/><rect x="384" y="1" width="1" height="1" fill="#0a78e0"/><rect x="387" y="1" width="1" height="1" fill="#0a78e0"/><rect x="390" y="1" width="1" height="1" fill="#0a78e0"/><rect x="393" y="1" width="1" height="1" fill="#0a78e0"/><rect x="396" y="1" width="1" height="1" fill="#0a78e0"/><rect x="399" y="1" width="1" height="1" fill="#0a78e0"/><rect x="402" y="1" width="1" height="1" fill="#0a78e0"/><rect x="405" y="1" width="1" height="1" fill="#0a78e0"/><rect x="408" y="1" width="1" height="1" fill="#0a78e0"/><rect x="411" y="1" width="1" height="1" fill="#0a78e0"/><rect x="414" y="1" width="1" height="1" fill="#0a78e0"/><rect x="417" y="1" width="1" height="1" fill="#0a78e0"/><rect x="420" y="1" width="1" height="1" fill="#0a78e0"/><rect x="423" y="1" width="1" height="1" fill="#0a78e0"/><rect x="426" y="1" width="1" height="1" fill="#0a78e0"/><rect x="429" y="1" width="1" height="1" fill="#0a78e0"/><rect x="432" y="1" width="1" height="1" fill="#0a78e0"/><rect x="435" y="1" width="1" height="1" fill="#0a78e0"/><rect x="438" y="1" width="1" height="1" fill="#0a78e0"/><rect x="441" y="1" width="1" height="1" fill="#0a78e0"/><rect x="444" y="1" width="1" height="1" fill="#0a78e0"/><rect x="447" y="1" width="1" height="1" fill="#0a78e0"/><rect x="450" y="1" width="1" height="1" fill="#0a78e0"/><rect x="453" y="1" width="1" height="1" fill="#0a78e0"/><rect x="456" y="1" width="1" height="1" fill="#0a78e0"/><rect x="459" y="1" width="1" height="1" fill="#0a78e0"/><rect x="462" y="1" width="1" height="1" fill="#0a78e0"/><rect x="465" y="1" width="1" height="1" fill="#0a78e0"/><rect x="468" y="1" width="1" height="1" fill="#0a78e0"/><rect x="471" y="1" width="1" height="1" fill="#0a78e0"/><rect x="474" y="1" width="1" height="1" fill="#0a78e0"/><rect x="477" y="1" width="1" height="1" fill="#0a78e0"/><rect x="480" y="1" width="1" height="1" fill="#0a78e0"/><rect x="483" y="1" width="1" height="1" fill="#0a78e0"/><rect x="486" y="1" width="1" height="1" fill="#0a78e0"/><rect x="489" y="1" width="1" height="1" fill="#0a78e0"/><rect x="492" y="1" width="1" height="1" fill="#0a78e0"/><rect x="495" y="1" width="1" height="1" fill="#0a78e0"/><rect x="498" y="1" width="1" height="1" fill="#0a78e0"/><rect x="501" y="1" width="1" height="1" fill="#0a78e0"/></g><path transform="translate(510,0)" d="M0 0 L6 0 L3 4Z" fill="#0066d0"/></svg>
<div style="left:595px;top:922px;width:1317px;height:63px;background:#fff;"></div>
<div style="left:595px;top:985px;width:1317px;height:29px;background:linear-gradient(#ffffff,#e3e3e3);"></div>
<svg style="position:absolute;left:686px;top:998px" width="7" height="5"><path d="M0 0.5 H6 L3 4 Z" fill="#000"/></svg>
<div style="left:740px;top:993px;width:13px;height:13px;background:#fff;border:1px solid #333;"></div>
<svg style="position:absolute;left:1832px;top:991px" width="18" height="17">
<defs><radialGradient id="sp" cx="0.45" cy="0.4" r="0.6"><stop offset="0" stop-color="#f0f0f0"/><stop offset="0.6" stop-color="#b8b8b8"/><stop offset="1" stop-color="#8a8a8a"/></radialGradient></defs>
<ellipse cx="7.2" cy="7.4" rx="6.2" ry="6.8" transform="rotate(-25 7.2 7.4)" fill="#4a4a4a"/>
<ellipse cx="7.8" cy="6.9" rx="4.4" ry="5" transform="rotate(-25 7.8 6.9)" fill="url(#sp)"/>
<circle cx="6.9" cy="6.2" r="1.7" fill="#707070"/><circle cx="6.6" cy="5.8" r="0.8" fill="#eee"/>
<circle cx="1.9" cy="5" r="1.3" fill="none" stroke="#5a5ac8" stroke-width="0.9"/>
<path d="M13.6 10.2 Q12.8 13.6 9.6 15.2 M15.8 9.8 Q15 15 10.2 16.6" fill="none" stroke="#8080f0" stroke-width="0.9"/>
</svg>
<svg style="position:absolute;left:1890px;top:998px" width="7" height="5"><path d="M0 0.5 H6 L3 4 Z" fill="#000"/></svg>
<div style="left:0px;top:1021px;width:1919px;height:1px;background:#d9d9d9;"></div>
<div style="left:22px;top:4px;white-space:pre;color:#8a8a8a;font-family:'Liberation Sans', sans-serif;font-size:12px;line-height:16px;font-weight:normal;">DR514 V2.1.3</div>
<div style="left:5px;top:26px;white-space:pre;color:#555;font-family:'Liberation Sans', sans-serif;font-size:12px;line-height:16px;font-weight:normal;">文件</div>
<div style="left:44px;top:25px;white-space:pre;color:#666;font-family:'Liberation Sans', sans-serif;font-size:13px;line-height:17px;font-weight:normal;">Language</div>
<div style="left:10px;top:53px;white-space:pre;color:#000;font-family:'Liberation Sans', sans-serif;font-size:12px;line-height:16px;font-weight:normal;">[PC串口参数]</div>
<div style="left:87px;top:52px;white-space:pre;color:#000;font-family:'Liberation Sans', sans-serif;font-size:12px;line-height:16px;font-weight:normal;">:</div>
<div style="left:94px;top:53px;white-space:pre;color:#000;font-family:'Liberation Sans', sans-serif;font-size:12px;line-height:16px;font-weight:normal;">串口号</div>
<div style="left:136px;top:52px;white-space:pre;color:#000;font-family:'Liberation Sans', sans-serif;font-size:11.5px;line-height:15.5px;font-weight:normal;">COM10</div>
<div style="left:215px;top:53px;white-space:pre;color:#000;font-family:'Liberation Sans', sans-serif;font-size:12px;line-height:16px;font-weight:normal;">波特率</div>
<div style="left:256px;top:52px;white-space:pre;color:#000;font-family:'Liberation Sans', sans-serif;font-size:11.5px;line-height:15.5px;font-weight:normal;letter-spacing:0.8px;">115200</div>
<div style="left:346px;top:53px;white-space:pre;color:#000;font-family:'Liberation Sans', sans-serif;font-size:12px;line-height:16px;font-weight:normal;">检验<span style="margin:0 1.2px">/</span>数据<span style="margin:0 1.2px">/</span>停止</div>
<div style="left:433px;top:52px;white-space:pre;color:#000;font-family:'Liberation Sans', sans-serif;font-size:11.5px;line-height:15.5px;font-weight:normal;">NONI</div>
<div style="left:486px;top:52px;white-space:pre;color:#000;font-family:'Liberation Sans', sans-serif;font-size:11.5px;line-height:15.5px;font-weight:normal;">8</div>
<div style="left:536px;top:52px;white-space:pre;color:#000;font-family:'Liberation Sans', sans-serif;font-size:11.5px;line-height:15.5px;font-weight:normal;">1</div>
<div style="left:623px;top:53px;white-space:pre;color:#0000ff;font-family:'Liberation Sans', sans-serif;font-size:12px;line-height:16px;font-weight:bold;letter-spacing:1.3px;">关闭串口</div>
<div style="left:752px;top:55px;white-space:pre;color:#000;font-family:'Liberation Sans', sans-serif;font-size:12px;line-height:16px;font-weight:normal;">导入所有参数</div>
<div style="left:916px;top:55px;white-space:pre;color:#000;font-family:'Liberation Sans', sans-serif;font-size:12px;line-height:16px;font-weight:normal;">导出所有参数</div>
<div style="left:7px;top:80px;white-space:pre;color:#000;font-family:'Liberation Sans', sans-serif;font-size:12px;line-height:16px;font-weight:normal;">选择工作模式</div>
<div style="left:39px;top:108px;white-space:pre;color:#000;font-family:'Liberation Sans', sans-serif;font-size:12px;line-height:16px;font-weight:normal;">网络透传模式</div>
<div style="left:174px;top:108px;white-space:pre;color:#000;font-family:'Liberation Sans', sans-serif;font-size:12px;line-height:16px;font-weight:normal;">云组态模式</div>
<div style="left:311px;top:108px;white-space:pre;color:#000;font-family:'Liberation Sans', sans-serif;font-size:12px;line-height:16px;font-weight:normal;">UDC模式</div>
<div style="left:449px;top:108px;white-space:pre;color:#000;font-family:'Liberation Sans', sans-serif;font-size:12px;line-height:16px;font-weight:normal;">HTTPD模式</div>
<div style="left:99px;top:140px;white-space:pre;color:#222;font-family:'Liberation Sans', sans-serif;font-size:12px;line-height:16px;font-weight:normal;">TCP/UDP</div>
<div style="left:252px;top:140px;white-space:pre;color:#222;font-family:'Liberation Sans', sans-serif;font-size:12px;line-height:16px;font-weight:normal;">TCP/UDP</div>
<div style="left:406px;top:141px;white-space:pre;color:#666;font-family:'Liberation Sans', sans-serif;font-size:11px;line-height:15px;font-weight:normal;">串口数据</div>
<div style="left:39px;top:207px;white-space:pre;color:#222;font-family:'Liberation Sans', sans-serif;font-size:12px;line-height:16px;font-weight:normal;">PC</div>
<div style="left:189px;top:211px;white-space:pre;color:#666;font-family:'Liberation Sans', sans-serif;font-size:11px;line-height:15px;font-weight:normal;">网络</div>
<div style="left:323px;top:206px;white-space:pre;color:#222;font-family:'Liberation Sans', sans-serif;font-size:12px;line-height:16px;font-weight:normal;">M2M</div>
<div style="left:354px;top:207px;white-space:pre;color:#555;font-family:'Liberation Sans', sans-serif;font-size:11px;line-height:15px;font-weight:normal;">设备</div>
<div style="left:482px;top:211px;white-space:pre;color:#666;font-family:'Liberation Sans', sans-serif;font-size:11px;line-height:15px;font-weight:normal;">串口设备</div>
<div style="left:7px;top:234px;white-space:pre;color:#000;font-family:'Liberation Sans', sans-serif;font-size:12px;line-height:16px;font-weight:normal;">网络透传模式相关参数</div>
<div style="left:29px;top:262px;white-space:pre;color:#000;font-family:'Liberation Sans', sans-serif;font-size:12px;line-height:16px;font-weight:normal;">连接服务器A</div>
<div style="left:217px;top:277px;white-space:pre;color:#000;font-family:'Liberation Sans', sans-serif;font-size:12px;line-height:16px;font-weight:normal;">地址和端口</div>
<div style="left:289px;top:274px;white-space:pre;color:#000;font-family:'Liberation Sans', sans-serif;font-size:11.5px;line-height:15.5px;font-weight:normal;">47.</div>
<div style="left:340px;top:274px;white-space:pre;color:#000;font-family:'Liberation Sans', sans-serif;font-size:11.5px;line-height:15.5px;font-weight:normal;">.32</div>
<div style="left:459px;top:274px;white-space:pre;color:#000;font-family:'Liberation Sans', sans-serif;font-size:11.5px;line-height:15.5px;font-weight:normal;">100</div>
<div style="left:229px;top:300px;white-space:pre;color:#000;font-family:'Liberation Sans', sans-serif;font-size:12px;line-height:16px;font-weight:normal;">连接类型</div>
<div style="left:293px;top:299px;white-space:pre;color:#000;font-family:'Liberation Sans', sans-serif;font-size:11.5px;line-height:15.5px;font-weight:normal;">TCP</div>
<div style="left:462px;top:300px;white-space:pre;color:#000;width:29px;overflow:hidden;font-family:'Liberation Sans', sans-serif;font-size:12px;line-height:16px;font-weight:normal;">长连接</div>
<div style="left:207px;top:326px;white-space:pre;color:#000;font-family:'Liberation Sans', sans-serif;font-size:12px;line-height:16px;font-weight:normal;">超时时间(秒)</div>
<div style="left:289px;top:326px;white-space:pre;color:#000;font-family:'Liberation Sans', sans-serif;font-size:11.5px;line-height:15.5px;font-weight:normal;">5</div>
<div style="left:28px;top:356px;white-space:pre;color:#000;font-family:'Liberation Sans', sans-serif;font-size:12px;line-height:16px;font-weight:normal;">连接服务器B</div>
<div style="left:28px;top:452px;white-space:pre;color:#000;font-family:'Liberation Sans', sans-serif;font-size:12px;line-height:16px;font-weight:normal;">启用心跳包</div>
<div style="left:28px;top:544px;white-space:pre;color:#000;font-family:'Liberation Sans', sans-serif;font-size:12px;line-height:16px;font-weight:normal;">启用注册包</div>
<div style="left:7px;top:650px;white-space:pre;color:#000;font-family:'Liberation Sans', sans-serif;font-size:12px;line-height:16px;font-weight:normal;">全局参数</div>
<div style="left:48px;top:684px;white-space:pre;color:#000;font-family:'Liberation Sans', sans-serif;font-size:12px;line-height:16px;font-weight:normal;">串口参数</div>
<div style="left:176px;top:686px;white-space:pre;color:#000;font-family:'Liberation Sans', sans-serif;font-size:12px;line-height:16px;font-weight:normal;">串口波特率</div>
<div style="left:260px;top:684px;white-space:pre;color:#000;width:39px;overflow:hidden;font-family:'Liberation Sans', sans-serif;font-size:11.5px;line-height:15.5px;font-weight:normal;letter-spacing:0.8px;">115200</div>
<div style="left:155px;top:711px;white-space:pre;color:#000;font-family:'Liberation Sans', sans-serif;font-size:12px;line-height:16px;font-weight:normal;">检验<span style="margin:0 1.2px">/</span>数据<span style="margin:0 1.2px">/</span>停止</div>
<div style="left:259px;top:708px;white-space:pre;color:#000;font-family:'Liberation Sans', sans-serif;font-size:11.5px;line-height:15.5px;font-weight:normal;">NONE</div>
<div style="left:361px;top:708px;white-space:pre;color:#000;font-family:'Liberation Sans', sans-serif;font-size:11.5px;line-height:15.5px;font-weight:normal;">8</div>
<div style="left:462px;top:708px;white-space:pre;color:#000;font-family:'Liberation Sans', sans-serif;font-size:11.5px;line-height:15.5px;font-weight:normal;">1</div>
<div style="left:174px;top:736px;white-space:pre;color:#000;font-family:'Liberation Sans', sans-serif;font-size:12px;line-height:16px;font-weight:normal;">打包时间(ms)</div>
<div style="left:257px;top:733px;white-space:pre;color:#000;font-family:'Liberation Sans', sans-serif;font-size:11.5px;line-height:15.5px;font-weight:normal;">50</div>
<div style="left:365px;top:735px;white-space:pre;color:#000;font-family:'Liberation Sans', sans-serif;font-size:12px;line-height:16px;font-weight:normal;">打包长度(Bytes)</div>
<div style="left:459px;top:734px;white-space:pre;color:#000;font-family:'Liberation Sans', sans-serif;font-size:11.5px;line-height:15.5px;font-weight:normal;">1024</div>
<div style="left:34px;top:746px;white-space:pre;color:#000;font-family:'Liberation Sans', sans-serif;font-size:12px;line-height:16px;font-weight:normal;">高级</div>
<div style="left:189px;top:772px;white-space:pre;color:#000;font-family:'Liberation Sans', sans-serif;font-size:12px;line-height:16px;font-weight:normal;">指令回显</div>
<div style="left:224px;top:798px;white-space:pre;color:#000;font-family:'Liberation Sans', sans-serif;font-size:12px;line-height:16px;font-weight:normal;">命令密码</div>
<div style="left:278px;top:795px;white-space:pre;color:#000;font-family:'Liberation Sans', sans-serif;font-size:11.5px;line-height:15.5px;font-weight:normal;">usr.cn</div>
<div style="left:223px;top:822px;white-space:pre;color:#000;font-family:'Liberation Sans', sans-serif;font-size:12px;line-height:16px;font-weight:normal;">启动信息</div>
<div style="left:277px;top:820px;white-space:pre;color:#000;font-family:'Liberation Sans', sans-serif;font-size:11.5px;line-height:15.5px;font-weight:normal;">[USR-DR514]</div>
<div style="left:249px;top:845px;white-space:pre;color:#000;font-family:'Liberation Sans', sans-serif;font-size:11.5px;line-height:15.5px;font-weight:normal;">APN</div>
<div style="left:276px;top:845px;white-space:pre;color:#000;font-family:'Liberation Sans', sans-serif;font-size:11.5px;line-height:15.5px;font-weight:normal;">,,,0</div>
<div style="left:143px;top:870px;white-space:pre;color:#000;font-family:'Liberation Sans', sans-serif;font-size:12px;line-height:16px;font-weight:normal;">无数据自动重启时间(秒)</div>
<div style="left:277px;top:868px;white-space:pre;color:#000;font-family:'Liberation Sans', sans-serif;font-size:11.5px;line-height:15.5px;font-weight:normal;">1800</div>
<div style="left:597px;top:80px;white-space:pre;color:#000;font-family:'Liberation Sans', sans-serif;font-size:12px;line-height:16px;font-weight:normal;">执行命令及提示</div>
<div style="left:716px;top:117px;white-space:pre;color:#000;font-family:'Liberation Sans', sans-serif;font-size:12px;line-height:16px;font-weight:normal;">获取当前参数</div>
<div style="left:998px;top:118px;white-space:pre;color:#000;font-family:'Liberation Sans', sans-serif;font-size:12px;line-height:16px;font-weight:normal;">设置所有参数</div>
<div style="left:708px;top:157px;white-space:pre;color:#000;font-family:'Liberation Sans', sans-serif;font-size:12px;line-height:16px;font-weight:normal;">进入配置状态</div>
<div style="left:988px;top:157px;white-space:pre;color:#000;font-family:'Liberation Sans', sans-serif;font-size:12px;line-height:16px;font-weight:normal;">进入通讯状态</div>
<div style="left:671px;top:196px;white-space:pre;color:#000;font-family:'Liberation Sans', sans-serif;font-size:12px;line-height:16px;font-weight:normal;">帮助信息</div>
<div style="left:860px;top:196px;white-space:pre;color:#000;font-family:'Liberation Sans', sans-serif;font-size:12px;line-height:16px;font-weight:normal;">设备重启</div>
<div style="left:1048px;top:196px;white-space:pre;color:#000;font-family:'Liberation Sans', sans-serif;font-size:12px;line-height:16px;font-weight:normal;">查询版本</div>
<div style="left:664px;top:234px;white-space:pre;color:#000;font-family:'Liberation Sans', sans-serif;font-size:12px;line-height:16px;font-weight:normal;">查信号强度</div>
<div style="left:848px;top:234px;white-space:pre;color:#000;font-family:'Liberation Sans', sans-serif;font-size:12px;line-height:16px;font-weight:normal;">恢复出厂设置</div>
<div style="left:1048px;top:234px;white-space:pre;color:#000;font-family:'Liberation Sans', sans-serif;font-size:12px;line-height:16px;font-weight:normal;">系统重启</div>
<div style="left:616px;top:279px;white-space:pre;color:#000;font-family:'Liberation Sans', sans-serif;font-size:12px;line-height:16px;font-weight:normal;">时间戳</div>
<div style="left:691px;top:277px;white-space:pre;color:#000;font-family:'Liberation Sans', sans-serif;font-size:11.5px;line-height:15.5px;font-weight:normal;">Hex</div>
<div style="left:740px;top:278px;white-space:pre;color:#000;font-family:'Liberation Sans', sans-serif;font-size:12px;line-height:16px;font-weight:normal;">接收:14112</div>
<div style="left:1840px;top:279px;white-space:pre;color:#000;font-family:'Liberation Sans', sans-serif;font-size:12px;line-height:16px;font-weight:normal;">复位计数</div>
<div style="left:596px;top:314px;white-space:pre;color:#008000;font-family:'Liberation Sans', sans-serif;font-size:15.5px;line-height:19.5px;font-weight:normal;letter-spacing:-1.6px;">OK</div>
<div style="left:596px;top:386px;white-space:pre;color:#0000ff;font-family:'Liberation Sans', sans-serif;font-size:15.5px;line-height:19.5px;font-weight:normal;letter-spacing:0.45px;">&gt;[Tx-&gt;][14:27:01][asc]</div>
<div style="left:596px;top:410px;white-space:pre;color:#0000ff;font-family:'Liberation Sans', sans-serif;font-size:15.5px;line-height:19.5px;font-weight:normal;letter-spacing:-0.05px;">AT+APN=,,,0</div>
<div style="left:596px;top:458px;white-space:pre;color:#000;font-family:'Liberation Sans', sans-serif;font-size:15.5px;line-height:19.5px;font-weight:normal;letter-spacing:0.45px;">&gt;[Rx&lt;-][14:27:01][asc]</div>
<div style="left:596px;top:482px;white-space:pre;color:#000;font-family:'Liberation Sans', sans-serif;font-size:15.5px;line-height:19.5px;font-weight:normal;letter-spacing:-0.05px;">AT+APN=,,,0</div>
<div style="left:596px;top:530px;white-space:pre;color:#008000;font-family:'Liberation Sans', sans-serif;font-size:15.5px;line-height:19.5px;font-weight:normal;letter-spacing:0.45px;">&gt;[Rx&lt;-][14:27:01][asc]</div>
<div style="left:596px;top:578px;white-space:pre;color:#008000;font-family:'Liberation Sans', sans-serif;font-size:15.5px;line-height:19.5px;font-weight:normal;letter-spacing:-1.6px;">OK</div>
<div style="left:596px;top:650px;white-space:pre;color:#0000ff;font-family:'Liberation Sans', sans-serif;font-size:15.5px;line-height:19.5px;font-weight:normal;letter-spacing:0.45px;">&gt;[Tx-&gt;][14:27:01][asc]</div>
<div style="left:596px;top:674px;white-space:pre;color:#0000ff;font-family:'Liberation Sans', sans-serif;font-size:15.5px;line-height:19.5px;font-weight:normal;letter-spacing:-0.2px;">AT+RSTIM=1800</div>
<div style="left:596px;top:722px;white-space:pre;color:#008000;font-family:'Liberation Sans', sans-serif;font-size:15.5px;line-height:19.5px;font-weight:normal;letter-spacing:0.45px;">&gt;[Rx&lt;-][14:27:02][asc]</div>
<div style="left:596px;top:746px;white-space:pre;color:#008000;font-family:'Liberation Sans', sans-serif;font-size:15.5px;line-height:19.5px;font-weight:normal;letter-spacing:-0.2px;">AT+RSTIM=1800</div>
<div style="left:596px;top:794px;white-space:pre;color:#008000;font-family:'Liberation Sans', sans-serif;font-size:15.5px;line-height:19.5px;font-weight:normal;letter-spacing:-1.6px;">OK</div>
<div style="left:597px;top:867px;white-space:pre;color:#000;font-family:'Liberation Sans', sans-serif;font-size:15px;line-height:19px;font-weight:normal;">执行完毕</div>
<div style="left:596px;top:926px;white-space:pre;color:#000;font-family:'Liberation Sans', sans-serif;font-size:16px;line-height:20px;font-weight:normal;">usr.cnAT+WKMOD</div>
<div style="left:607px;top:993px;white-space:pre;color:#000;font-family:'Liberation Sans', sans-serif;font-size:12px;line-height:16px;font-weight:normal;">通过串口发送</div>
<div style="left:755px;top:992px;white-space:pre;color:#000;font-family:'Liberation Sans', sans-serif;font-size:11.5px;line-height:15.5px;font-weight:normal;">Hex</div>
<div style="left:804px;top:994px;white-space:pre;color:#000;font-family:'Liberation Sans', sans-serif;font-size:12px;line-height:16px;font-weight:normal;">发送:113</div>
<div style="left:1853px;top:993px;white-space:pre;color:#000;font-family:'Liberation Sans', sans-serif;font-size:12px;line-height:16px;font-weight:normal;">发送</div>
<div style="left:1628px;top:946px;white-space:pre;color:rgba(120,120,120,0.55);font-family:'Liberation Sans', sans-serif;font-size:20px;line-height:24px;font-weight:normal;letter-spacing:0.75px;">激活 Windows</div>
<div style="left:1630px;top:971px;white-space:pre;color:rgba(120,120,120,0.55);font-family:'Liberation Sans', sans-serif;font-size:14px;line-height:18px;font-weight:normal;letter-spacing:1.05px;">转到“设置”以激活 Windows。</div>
</body></html>
